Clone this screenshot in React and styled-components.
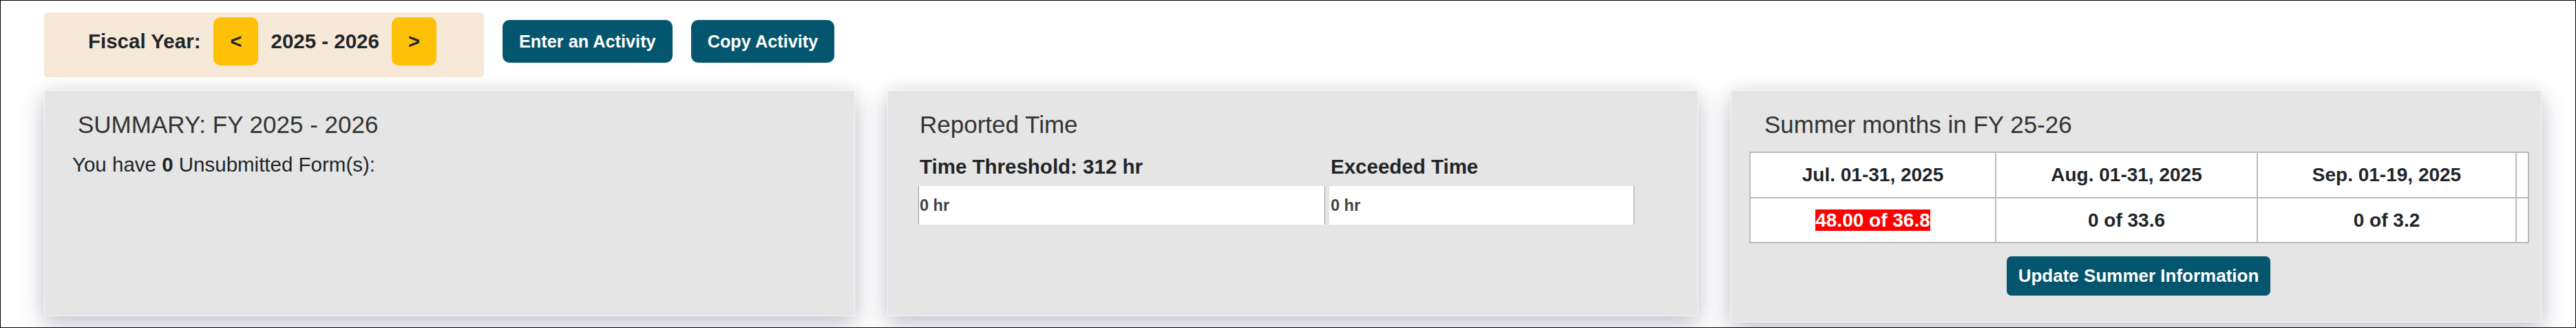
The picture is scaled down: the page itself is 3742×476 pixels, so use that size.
import React from 'react';
import styled, { createGlobalStyle } from 'styled-components';

const GlobalStyle = createGlobalStyle`
  html, body {
    margin: 0;
    padding: 0;
    background: #fff;
  }
  body {
    font-family: "Liberation Sans", Arial, sans-serif;
    color: #212529;
  }
`;

const Page = styled('div')`
  box-sizing: border-box;
  width: 3742px;
  height: 476px;
  border: 1px solid #000;
  overflow: hidden;
  padding-left: 63px;
  background: #fff;
`;

const Header = styled('div')`
  display: flex;
  align-items: flex-start;
  gap: 27px;
  padding-top: 17px;
`;

const FiscalBox = styled('div')`
  display: flex;
  align-items: center;
  gap: 18px;
  padding: 7px 69px 17px 64px;
  background: #f7e9d8;
  border-radius: 5px;
`;

const FiscalText = styled('span')`
  font-size: 29.5px;
  font-weight: 700;
  color: #212529;
  white-space: nowrap;
`;

const ArrowButton = styled('button')`
  width: 65px;
  height: 70px;
  border: none;
  border-radius: 10px;
  background: #ffc107;
  color: #212529;
  font-family: inherit;
  font-size: 29px;
  font-weight: 700;
  padding: 0;
  margin-left: ${({ $first }) => ($first ? '1px' : '0')};
`;

const ActionButton = styled('button')`
  margin-top: ${({ $top }) => $top || '11px'};
  height: ${({ $height }) => $height || '62px'};
  padding: 0 ${({ $padX }) => $padX || '24px'};
  border: none;
  border-radius: ${({ $radius }) => $radius || '10px'};
  background: #04566e;
  color: #fff;
  font-family: inherit;
  font-size: ${({ $size }) => $size || '25.3px'};
  font-weight: 700;
  white-space: nowrap;
`;

const Cards = styled('div')`
  display: grid;
  grid-template-columns: repeat(3, 1178px);
  column-gap: 47px;
  align-items: start;
  margin-top: 19px;
`;

const Card = styled('section')`
  box-sizing: border-box;
  min-height: 328px;
  background: #e5e5e5;
  border: 1px solid #f6f6f6;
  box-shadow: 0 12px 34px rgba(40, 40, 80, 0.26), 0 0 22px rgba(0, 0, 0, 0.05);
  padding: 28px 20px ${({ $padBottom }) => $padBottom || '0'} ${({ $padLeft }) => $padLeft}px;
`;

const CardTitle = styled('h2')`
  margin: 0 0 ${({ $gap }) => $gap}px ${({ $indent }) => $indent}px;
  font-size: 35px;
  font-weight: 400;
  line-height: 1.2;
  color: #333;
`;

const BodyText = styled('p')`
  margin: 0;
  font-size: 29.5px;
  line-height: 1.2;
  color: #212529;
`;

const TimeGrid = styled('div')`
  display: grid;
  grid-template-columns: 591px 443px;
  column-gap: 6px;
  row-gap: 10px;
`;

const TimeLabel = styled('div')`
  padding-left: 2px;
  font-size: 29.5px;
  font-weight: 700;
  line-height: 36px;
  color: #212529;
`;

const TimeValue = styled('div')`
  box-sizing: border-box;
  height: 56px;
  display: flex;
  align-items: center;
  padding-left: 1px;
  background: #fff;
  border-left: ${({ $leftEdge }) => ($leftEdge ? '1px solid #9a9a9a' : '1px solid #fff')};
  border-right: 1px solid #9a9a9a;
  font-size: 23.5px;
  font-weight: 700;
  color: #444;
`;

const SummerTable = styled('table')`
  width: 1131px;
  table-layout: fixed;
  border-collapse: collapse;
  background: #fff;
  border: 2px solid #b8bbbe;
`;

const Cell = styled('td')`
  height: ${({ $height }) => $height}px;
  padding: 0;
  border: 2px solid #b8bbbe;
  text-align: center;
  vertical-align: middle;
  font-size: 28px;
  font-weight: 700;
  color: #212529;
`;

const OverLimit = styled('span')`
  background: #ff0000;
  color: #fff;
`;

const ButtonRow = styled('div')`
  width: 1131px;
  display: flex;
  justify-content: center;
`;

const summer = [
  { label: 'Jul. 01-31, 2025', used: '48.00', of: '36.8', over: true },
  { label: 'Aug. 01-31, 2025', used: '0', of: '33.6' },
  { label: 'Sep. 01-19, 2025', used: '0', of: '3.2' },
];

const colWidths = [357, 380, 376, 18];

export default function App() {
  return (
    <>
      <GlobalStyle />
      <Page>
        <Header>
          <FiscalBox>
            <FiscalText>Fiscal Year:</FiscalText>
            <ArrowButton $first>&lt;</ArrowButton>
            <FiscalText>2025 - 2026</FiscalText>
            <ArrowButton>&gt;</ArrowButton>
          </FiscalBox>
          <ActionButton>Enter an Activity</ActionButton>
          <ActionButton>Copy Activity</ActionButton>
        </Header>

        <Cards>
          <Card $padLeft={40}>
            <CardTitle $indent={8} $gap={19}>SUMMARY: FY 2025 - 2026</CardTitle>
            <BodyText>
              You have <b>0</b> Unsubmitted Form(s):
            </BodyText>
          </Card>

          <Card $padLeft={44}>
            <CardTitle $indent={2} $gap={22}>Reported Time</CardTitle>
            <TimeGrid>
              <TimeLabel>Time Threshold: 312 hr</TimeLabel>
              <TimeLabel>Exceeded Time</TimeLabel>
              <TimeValue $leftEdge>0 hr</TimeValue>
              <TimeValue>0 hr</TimeValue>
            </TimeGrid>
          </Card>

          <Card $padLeft={26} $padBottom="38px">
            <CardTitle $indent={22} $gap={18}>Summer months in FY 25-26</CardTitle>
            <SummerTable>
              <colgroup>
                {colWidths.map((w, i) => (
                  <col key={i} style={{ width: w }} />
                ))}
              </colgroup>
              <tbody>
                <tr>
                  {summer.map((m) => (
                    <Cell key={m.label} $height={64}>{m.label}</Cell>
                  ))}
                  <Cell $height={64} />
                </tr>
                <tr>
                  {summer.map((m) => (
                    <Cell key={m.label} $height={63}>
                      {m.over ? (
                        <OverLimit>{m.used} of {m.of}</OverLimit>
                      ) : (
                        `${m.used} of ${m.of}`
                      )}
                    </Cell>
                  ))}
                  <Cell $height={63} />
                </tr>
              </tbody>
            </SummerTable>
            <ButtonRow>
              <ActionButton $top="19px" $height="57px" $padX="17px" $radius="7px" $size="26px">
                Update Summer Information
              </ActionButton>
            </ButtonRow>
          </Card>
        </Cards>
      </Page>
    </>
  );
}
